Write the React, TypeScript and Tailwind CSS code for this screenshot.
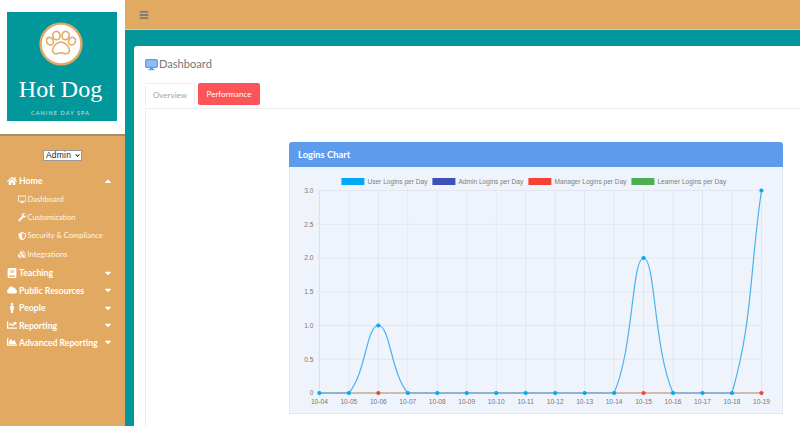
import React from "react";
import { FaHome, FaWrench, FaShieldAlt, FaCubes, FaBook, FaCloud, FaMale, FaChartLine, FaChartArea, FaCaretUp, FaCaretDown, FaBars, FaDesktop, FaChevronDown } from "react-icons/fa";

const labels = ["10-04","10-05","10-06","10-07","10-08","10-09","10-10","10-11","10-12","10-13","10-14","10-15","10-16","10-17","10-18","10-19"];
const values = [0,0,1,0,0,0,0,0,0,0,0,2,0,0,0,3];
const X0 = 29.4, DX = 29.47, ZERO = 226, UNIT = 67.5;
const px = (i: number) => X0 + i * DX;
const py = (v: number) => ZERO - v * UNIT;

function curve(): string {
  const pts = values.map((v, i) => ({ x: px(i), y: py(v) }));
  const t = 0.4;
  const clamp = (y: number) => Math.min(Math.max(y, py(3)), ZERO);
  let d = `M${pts[0].x} ${pts[0].y}`;
  const ctrl = pts.map((p, i) => {
    const a = pts[Math.max(i - 1, 0)], b = pts[Math.min(i + 1, pts.length - 1)];
    const d01 = Math.hypot(p.x - a.x, p.y - a.y), d12 = Math.hypot(b.x - p.x, b.y - p.y);
    const s = d01 + d12 || 1;
    const fa = (t * d01) / s, fb = (t * d12) / s;
    return { px: p.x - fa * (b.x - a.x), py: clamp(p.y - fa * (b.y - a.y)), nx: p.x + fb * (b.x - a.x), ny: clamp(p.y + fb * (b.y - a.y)) };
  });
  for (let i = 1; i < pts.length; i++) {
    d += `C${ctrl[i - 1].nx} ${ctrl[i - 1].ny} ${ctrl[i].px} ${ctrl[i].py} ${pts[i].x} ${pts[i].y}`;
  }
  return d;
}

function Chart() {
  const legend = [
    { x: 51.4, c: "#03a9f4", t: "User Logins per Day" },
    { x: 142.4, c: "#3f51b5", t: "Admin Logins per Day" },
    { x: 238.4, c: "#f44336", t: "Manager Logins per Day" },
    { x: 341.4, c: "#4caf50", t: "Learner Logins per Day" },
  ];
  return (
    <svg width="493" height="246" viewBox="0 0 493 246" className="block" fontFamily="'Liberation Sans', Arial, sans-serif">
      {legend.map((l) => (
        <g key={l.t}>
          <rect x={l.x} y={11} width={23} height={7} fill={l.c} />
          <text x={l.x + 26} y={16.6} fontSize="6.6" fill="#808080">{l.t}</text>
        </g>
      ))}
      {labels.map((l, i) => (
        <g key={l}>
          <line x1={px(i)} x2={px(i)} y1={py(3)} y2={ZERO + 4} stroke={i === 0 ? "#d9deea" : "#e1e6f0"} />
          <text x={px(i)} y={ZERO + 10.5} fontSize="6.6" fill="#777" textAnchor="middle">{l}</text>
        </g>
      ))}
      {[0, 0.5, 1, 1.5, 2, 2.5, 3].map((v) => (
        <g key={v}>
          <line x1={px(0) - 3} x2={px(15)} y1={py(v)} y2={py(v)} stroke="#e1e6f0" />
          <text x={23.4} y={py(v) + 2.4} fontSize="6.6" fill="#777" textAnchor="end">{v === 0 ? "0" : v.toFixed(1)}</text>
        </g>
      ))}
      <line x1={px(0)} x2={px(15)} y1={ZERO} y2={ZERO} stroke="#c9aa94" strokeWidth="1.3" />
      <path d={curve()} fill="none" stroke="#4db0ee" strokeWidth="1.2" />
      {[2, 11, 15].map((i) => <circle key={i} cx={px(i)} cy={ZERO} r="2.1" fill="#f44336" />)}
      {values.map((v, i) => <circle key={i} cx={px(i)} cy={py(v)} r="2.1" fill="#03a9f4" />)}
    </svg>
  );
}

function Logo() {
  return (
    <div className="w-[110px] h-[109px] bg-[#02989b] flex flex-col items-center pt-[10px] pr-[3px]">
      <svg width="44" height="44" viewBox="0 0 44 44" className="shrink-0">
        <circle cx="22" cy="22" r="20.4" fill="#fff" stroke="#e2a963" strokeWidth="2.4" />
        <g fill="none" stroke="#e2a963" strokeWidth="1.6">
          <ellipse cx="11" cy="19.2" rx="3.3" ry="4" transform="rotate(-30 11 19.2)" />
          <ellipse cx="17.4" cy="13.6" rx="3.6" ry="4.2" transform="rotate(-10 17.4 13.6)" />
          <ellipse cx="26.6" cy="13.6" rx="3.6" ry="4.2" transform="rotate(10 26.6 13.6)" />
          <ellipse cx="33" cy="19.2" rx="3.3" ry="4" transform="rotate(30 33 19.2)" />
          <path d="M22 20c-4 0-8.5 4.6-8.5 8.2 0 2.7 2.2 4 4.6 3.4 1.3-.3 2.7-.8 3.9-.8s2.6.5 3.9.8c2.4.6 4.6-.7 4.6-3.4 0-3.6-4.5-8.2-8.5-8.2z" />
        </g>
      </svg>
      <div className="mt-[8px] text-white text-[24px] leading-[30px] font-['Liberation_Serif',serif] whitespace-nowrap">Hot Dog</div>
      <div className="mt-[5px] text-[#c5e6e6] text-[5.5px] leading-[8px] tracking-[1.1px] font-['Lato',sans-serif] whitespace-nowrap">CANINE DAY SPA</div>
    </div>
  );
}

function Top({ icon, label, up, className }: { icon: React.ReactNode; label: string; up?: boolean; className: string }) {
  return (
    <div className={`flex items-center text-white font-bold text-[8.7px] pl-[7px] pr-[12px] ${className}`}>
      <span className="w-[12px] flex justify-start text-[10px]">{icon}</span>
      <span className="flex-1 whitespace-nowrap">{label}</span>
      {up ? <FaCaretUp className="text-[10px]" /> : <FaCaretDown className="text-[10px]" />}
    </div>
  );
}

function Sub({ icon, label }: { icon: React.ReactNode; label: string }) {
  return (
    <div className="h-[18.4px] flex items-center pl-[16.5px] text-[#fdf6ec] text-[7.6px]">
      <span className="w-[11px] flex justify-center text-[8.5px]">{icon}</span>
      <span className="whitespace-nowrap">{label}</span>
    </div>
  );
}

export default function App() {
  return (
    <div className="w-[800px] h-[426px] overflow-hidden flex font-['Lato',sans-serif] bg-[#02989b]">
      <aside className="w-[125px] shrink-0 flex flex-col bg-[#e2a963]">
        <div className="h-[136px] shrink-0 bg-white border-b-2 border-[#a98c68] pl-[7px] pt-[12px]">
          <Logo />
        </div>
        <div className="flex justify-center pt-[14px]">
          <div className="relative w-[39px] h-[11px]">
            <select defaultValue="Admin" className="block w-full h-full bg-white border border-[#999] text-[8.5px] leading-[9px] tracking-[0.2px] text-[#222] font-['Liberation_Sans',sans-serif] appearance-none pl-[2px]">
              <option>Admin</option>
            </select>
            <FaChevronDown className="absolute right-[2px] top-[3px] text-[5px] text-black pointer-events-none" />
          </div>
        </div>
        <nav className="pt-[11px] flex flex-col">
          <Top icon={<FaHome />} label="Home" up className="h-[18px]" />
          <Sub icon={<FaDesktop />} label="Dashboard" />
          <Sub icon={<FaWrench />} label="Customization" />
          <Sub icon={<FaShieldAlt />} label="Security & Compliance" />
          <Sub icon={<FaCubes />} label="Integrations" />
          <Top icon={<FaBook />} label="Teaching" className="h-[18px]" />
          <Top icon={<FaCloud />} label="Public Resources" className="h-[17.4px]" />
          <Top icon={<FaMale />} label="People" className="h-[17.4px]" />
          <Top icon={<FaChartLine />} label="Reporting" className="h-[17.4px]" />
          <Top icon={<FaChartArea />} label="Advanced Reporting" className="h-[17.4px]" />
        </nav>
      </aside>
      <main className="flex-1 min-w-0 flex flex-col">
        <header className="h-[30px] shrink-0 bg-[#e2a963] border-b border-[#e9c596] flex items-center pl-[14px] text-[#5f6b7a] text-[10px]">
          <FaBars />
        </header>
        <div className="flex-1 min-h-0 pl-[9px] pt-[16px]">
          <div className="h-full bg-white rounded-tl-[3px] overflow-hidden pl-[11px] pt-[10px]">
            <div className="flex items-center h-[17px] text-[#777777] text-[11.1px]">
              <svg width="13" height="12" viewBox="0 0 13 12" className="mr-[1px] shrink-0">
                <rect x="0.7" y="0.7" width="11.6" height="7.6" rx="1.2" fill="#8fbcf2" stroke="#5d9cec" strokeWidth="1.3" />
                <rect x="5" y="8.5" width="3" height="1.8" fill="#5d9cec" />
                <rect x="3.5" y="10" width="6" height="1.2" fill="#5d9cec" />
              </svg>
              <span>Dashboard</span>
            </div>
            <div className="flex gap-[3px] mt-[10px] h-[22px] items-stretch">
              <div className="w-[50px] rounded-t-[2px] border border-b-0 border-[#eeeeee] flex items-center justify-center text-[8px] text-[#a3a3a3]">Overview</div>
              <div className="w-[62px] rounded-[2px] bg-[#fc5458] flex items-center justify-center text-[8px] text-white">Performance</div>
            </div>
            <div className="mt-[3px] w-[700px] h-[400px] border border-[#eeeeee] pl-[143px] pt-[33px]">
              <section className="w-[494px] bg-[#eff4fc] border border-[#e2e6ee] border-t-0 rounded-t-[3px]">
                <div className="h-[25px] -mx-px bg-[#5d9cec] rounded-t-[3px] flex items-center pl-[9px] pt-[1px] text-white text-[9.4px] font-bold">Logins Chart</div>
                <Chart />
              </section>
            </div>
          </div>
        </div>
      </main>
    </div>
  );
}
